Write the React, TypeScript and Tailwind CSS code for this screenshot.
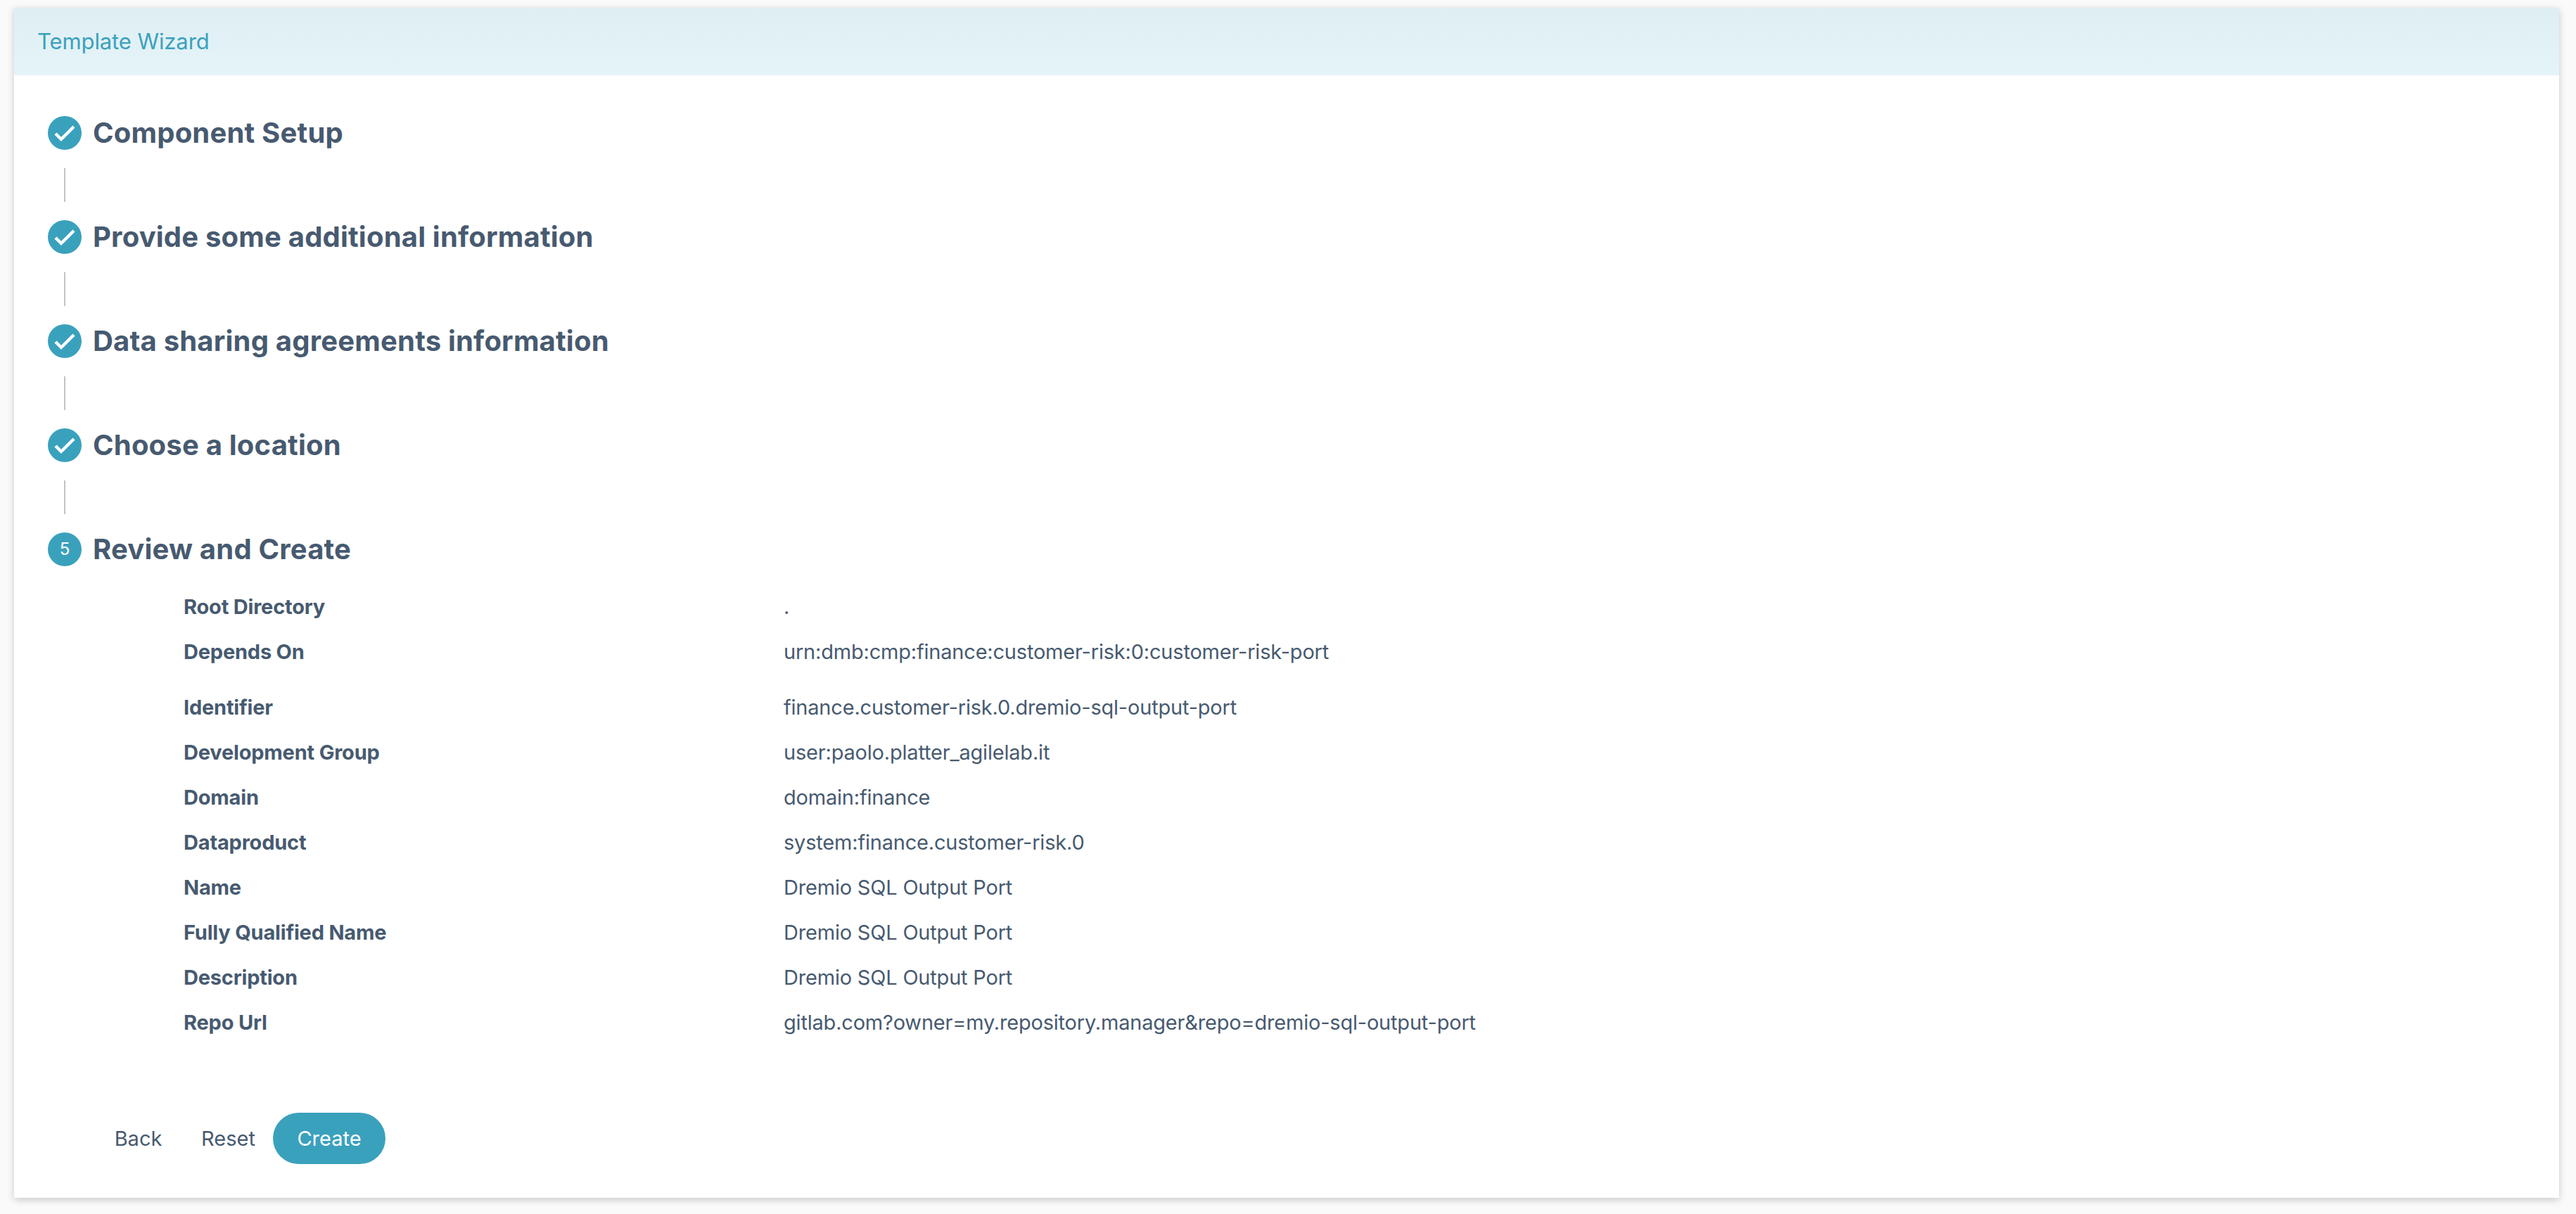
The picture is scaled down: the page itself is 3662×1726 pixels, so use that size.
const steps = [
  "Component Setup",
  "Provide some additional information",
  "Data sharing agreements information",
  "Choose a location",
];

const rows = [
  { label: "Root Directory", value: "." },
  { label: "Depends On", value: "urn:dmb:cmp:finance:customer-risk:0:customer-risk-port" },
  { label: "Identifier", value: "finance.customer-risk.0.dremio-sql-output-port" },
  { label: "Development Group", value: "user:paolo.platter_agilelab.it" },
  { label: "Domain", value: "domain:finance" },
  { label: "Dataproduct", value: "system:finance.customer-risk.0" },
  { label: "Name", value: "Dremio SQL Output Port" },
  { label: "Fully Qualified Name", value: "Dremio SQL Output Port" },
  { label: "Description", value: "Dremio SQL Output Port" },
  { label: "Repo Url", value: "gitlab.com?owner=my.repository.manager&repo=dremio-sql-output-port" },
];

const CheckIcon = () => (
  <svg viewBox="0 0 48 48" className="w-[48px] h-[48px] shrink-0">
    <circle cx="24" cy="24" r="24" fill="#3aa1bd" />
    <path d="M11 25l8 8 18-18" fill="none" stroke="#fff" strokeWidth="4.4" />
  </svg>
);

const StepTitle = ({ text }: { text: string }) => (
  <h2 className="ml-[16px] text-[40px] leading-[48px] font-bold text-[#475a70] tracking-[0.2px]">{text}</h2>
);

const App = () => {
  return (
    <div className="min-h-screen bg-[#fafafa] pt-[11px] pb-[22px] pl-[20px] pr-[24px] font-['Inter',sans-serif] text-[#475a70]">
      <div className="bg-white shadow-[0_3px_10px_rgba(0,0,0,0.2)]">
        <div className="h-[96px] flex items-center pl-[33px] bg-gradient-to-b from-[#dfeef2] to-[#e4f4f8]">
          <span className="text-[31px] text-[#3aa1bd] tracking-[-0.1px]">Template Wizard</span>
        </div>

        <div className="pt-[58px] pl-[48px] pb-[48px]">
          {steps.map((step) => (
            <div key={step}>
              <div className="flex items-center">
                <CheckIcon />
                <StepTitle text={step} />
              </div>
              <div className="ml-[23px] my-[26px] w-[2px] h-[48px] bg-[#c4c4c4]" />
            </div>
          ))}

          <div className="flex items-center">
            <div className="w-[48px] h-[48px] shrink-0 rounded-full bg-[#3aa1bd] flex items-center justify-center text-white text-[24px]">
              5
            </div>
            <StepTitle text="Review and Create" />
          </div>

          <div className="mt-[26px] pl-[193px]">
            {rows.map((row, i) => (
              <div key={row.label} className={`flex items-center h-[64px] text-[29px] ${i === 1 ? "mb-[15px]" : ""}`}>
                <div className="w-[853px] font-bold tracking-[-0.2px]">{row.label}</div>
                <div className="tracking-[-0.2px]">{row.value}</div>
              </div>
            ))}
          </div>

          <div className="mt-[96px] ml-[94px] flex items-center h-[73px] text-[29px]">
            <button className="w-[69px] text-center">Back</button>
            <button className="ml-[55px] w-[77px] text-center">Reset</button>
            <button className="ml-[25px] w-[160px] h-[73px] rounded-[37px] bg-[#3aa1bd] text-white">Create</button>
          </div>
        </div>
      </div>
    </div>
  );
};

export default App;
